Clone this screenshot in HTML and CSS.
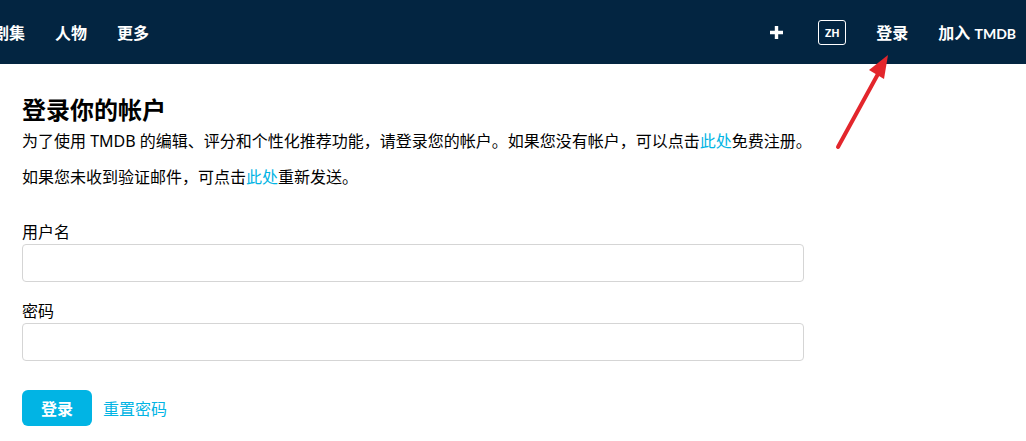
FILE: index.html
```html
<!doctype html>
<html>
<head>
<title>登录 — TMDB</title>
<link rel="stylesheet" href="styles.css">
</head>
<body>
<header class="topbar">
<nav class="menu">
<a href="#">剧集</a>
<a href="#">人物</a>
<a href="#">更多</a>
</nav>
<nav class="tools">
<a href="#" class="plus">
<svg width="15" height="15" viewBox="0 0 15 15"><path d="M7.5 1v13M1 7.5h13" stroke="#fff" stroke-width="3.4"/></svg>
</a>
<a href="#" class="lang">ZH</a>
<a href="#">登录</a>
<a href="#">加入 <span class="brand">TMDB</span></a>
</nav>
</header>
<main class="content">
<h2>登录你的帐户</h2>
<p class="intro">为了使用 TMDB 的编辑、评分和个性化推荐功能，请登录您的帐户。如果您没有帐户，可以点击<a href="#">此处</a>免费注册。</p>
<p>如果您未收到验证邮件，可点击<a href="#">此处</a>重新发送。</p>
<form class="login">
<label for="username">用户名</label>
<input type="text" id="username">
<label for="password">密码</label>
<input type="password" id="password">
<div class="actions">
<button type="button" class="submit">登录</button>
<a href="#">重置密码</a>
</div>
</form>
</main>
<svg class="arrow" width="1026" height="441" viewBox="0 0 1026 441">
<line x1="838" y1="147" x2="878" y2="74" stroke="#e3262c" stroke-width="4" stroke-linecap="round"/>
<polygon points="888,55 869,70 884,79" fill="#e3262c"/>
</svg>
</body>
</html>
```
FILE: styles.css
```css
body {
	margin : 0;
	font-family : "Noto Sans", "Noto Sans CJK SC", sans-serif;
	color : #000;
	background : #fff;
}
a {
	text-decoration : none;
	color : #01b4e4;
}
.topbar {
	height : 64px;
	background : #032541;
	display : flex;
	justify-content : space-between;
	align-items : center;
	overflow : hidden;
}
.topbar a {
	color : #fff;
	font-weight : 700;
	font-size : 16px;
}
.menu {
	display : flex;
	gap : 30px;
	margin-left : -7px;
}
.tools {
	display : flex;
	align-items : center;
	margin-right : 10px;
}
.tools a {
	margin-left : 30px;
}
.brand {
	font-family : Lato, sans-serif;
	font-size : 14px;
}
.plus {
	display : flex;
	margin-right : 4px;
}
.tools .lang {
	font-size : 11px;
	border : 1px solid #fff;
	border-radius : 3px;
	width : 26px;
	height : 23px;
	display : flex;
	align-items : center;
	justify-content : center;
}
.content {
	padding : 0 22px;
	width : 782px;
}
h2 {
	font-size : 24px;
	font-weight : 700;
	margin : 30px 0 0;
	line-height : 32px;
}
p {
	font-size : 16px;
	line-height : 24px;
	margin : 0 0 12px;
}
.intro {
	margin-top : 3px;
	white-space : nowrap;
}
.login {
	display : flex;
	flex-direction : column;
	margin-top : 32px;
}
label {
	font-size : 16px;
	line-height : 22px;
}
input {
	height : 38px;
	box-sizing : border-box;
	border : 1px solid #d5d5d5;
	border-radius : 4px;
	margin : 1px 0 18px;
	font-size : 16px;
}
.actions {
	display : flex;
	align-items : center;
	gap : 11px;
	margin-top : 11px;
}
.submit {
	background : #01b4e4;
	color : #fff;
	border : none;
	border-radius : 6px;
	width : 70px;
	height : 36px;
	font-size : 16px;
	font-weight : 700;
	font-family : inherit;
}
.arrow {
	position : absolute;
	top : 0;
	left : 0;
	pointer-events : none;
}
```
